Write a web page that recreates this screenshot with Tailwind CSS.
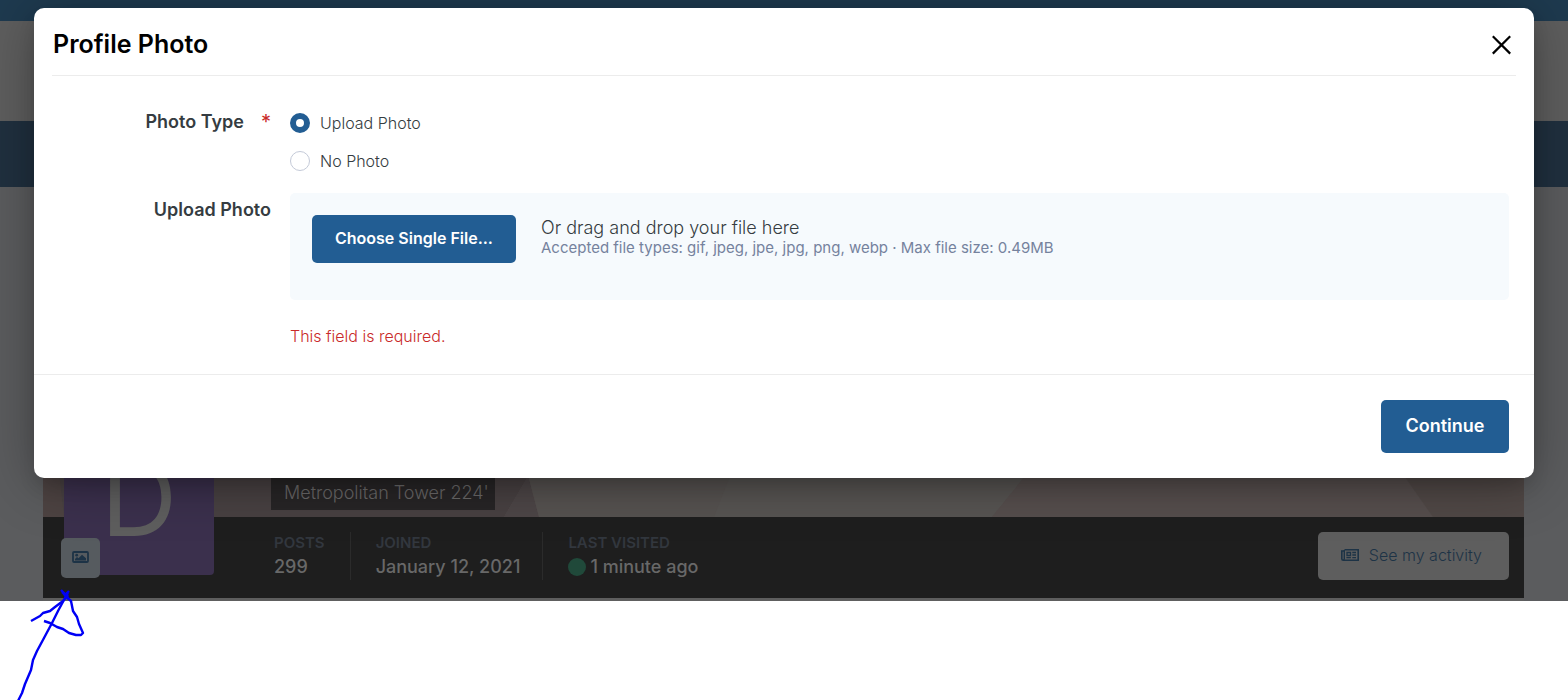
<!DOCTYPE html>
<html lang="en">
  <head>
    <meta charset="UTF-8" />
    <meta name="viewport" content="width=device-width, initial-scale=1.0" />
    <title>Profile Photo</title>
    <script src="https://cdn.jsdelivr.net/npm/@tailwindcss/browser@4"></script>
  </head>
  <body class="relative min-h-screen overflow-hidden bg-white font-['Inter',sans-serif]">
    <!-- Dimmed page -->
    <div class="flex flex-col overflow-hidden">
      <div class="h-[21px] bg-[#1e3a4f]"></div>
      <header class="h-[100px] bg-[#5e5e5e]"></header>
      <nav class="h-[66px] bg-[#20303f]"></nav>

      <main class="flex h-[414px] flex-col justify-end bg-[#5b5c5e] pr-11 pl-[43px]">
        <section class="relative border-b-3 border-[#5e5e5e]">
          <!-- Cover -->
          <div class="relative h-[100px] overflow-hidden bg-[#564f4e]">
            <svg class="absolute inset-0 h-full w-full" viewBox="0 0 1481 100" preserveAspectRatio="none">
              <path d="M0 0H520L461 100H0z" fill="#484142" />
              <path d="M0 0H10L21 100H0z" fill="#4d4342" />
              <path d="M520 0H470L496 100H461z" fill="#4d4647" />
              <path d="M470 0H760L671 100H496z" fill="#565250" />
              <path d="M710 0H1030L949 100H671z" fill="#575452" />
              <path d="M1030 0H1320L1390 100H949z" fill="#564e4d" />
              <path d="M1320 0H1481V100H1390z" fill="#504846" />
            </svg>
            <h1 class="absolute bottom-[7px] left-[228px] bg-[#272526] py-1 pr-1.5 pl-[13px] text-lg leading-[26px] font-light text-[#6a6868]">Metropolitan Tower 224'</h1>
          </div>

          <!-- Avatar -->
          <div class="absolute bottom-[23px] left-[21px] flex size-[150px] items-center justify-center rounded-sm bg-[#3b304d] pb-1 text-[106px] leading-none text-[#5e5e5e]">D</div>
          <button aria-label="Change photo" class="absolute bottom-5 left-[18px] flex h-10 w-[39px] items-center justify-center rounded-[5px] bg-[#565b5f] pb-0.5">
            <svg class="h-3 w-[17px]" viewBox="0 0 17 12" fill="none">
              <rect x="1" y="1" width="15" height="10" rx="1" stroke="#1d3346" stroke-width="1.8" />
              <circle cx="4.7" cy="4.2" r="1.4" fill="#1d3346" />
              <path d="M3 9.5V8l2-2 1.5 1.3L10 3.8 14 7.3v2.2z" fill="#1d3346" />
            </svg>
          </button>

          <!-- Stats -->
          <div class="flex h-[81px] items-center justify-between bg-[#1e1e1e] pr-[15px] pb-1 pl-[231px]">
            <dl class="flex h-12 divide-x divide-[#2b2b2b] text-lg leading-[26px] font-medium text-[#686868]">
              <div class="pr-[25px]">
                <dt class="text-[15px] leading-[22px] font-semibold text-[#32373e]">POSTS</dt>
                <dd>299</dd>
              </div>
              <div class="pr-[22px] pl-[25px]">
                <dt class="text-[15px] leading-[22px] font-semibold text-[#32373e]">JOINED</dt>
                <dd>January 12, 2021</dd>
              </div>
              <div class="pl-[25px]">
                <dt class="text-[15px] leading-[22px] font-semibold text-[#32373e]">LAST VISITED</dt>
                <dd class="flex items-center gap-1"><span class="size-[18px] rounded-full bg-[#20493a]"></span>1 minute ago</dd>
              </div>
            </dl>
            <a href="#" class="flex h-12 items-center gap-2.5 rounded-[5px] bg-[#5e5e5e] pr-[27px] pb-0.5 pl-[23px] text-base text-[#1d3346]">
              <svg class="h-3 w-[18px]" viewBox="0 0 18 12" fill="none" stroke="#1d3346">
                <path d="M3.5.8h13.7v10.4H2.2C1.3 11.2.8 10.7.8 9.8V2h2.4" stroke-width="1.6" />
                <path d="M3.3 1v8.8q0 1-1 1.2" stroke-width="1.4" />
                <path d="M6 3.5h3.5v3H6z" stroke-width="1.3" />
                <path d="M11.3 3.5h3.7M11.3 6h3.7M5.4 8.7h4.5M11.3 8.7h3.7" stroke-width="1.3" />
              </svg>
              <span class="font-light">See my activity</span>
            </a>
          </div>
        </section>
      </main>
    </div>

    <!-- Shadow area stops where the page ends -->
    <div class="absolute inset-x-0 top-0 h-[601px] overflow-hidden">
      <!-- Modal -->
      <div role="dialog" aria-labelledby="modal-title" class="mx-[34px] mt-2 rounded-[10px] bg-white shadow-[0_5px_55px_rgba(0,0,0,0.3),0_10px_20px_-5px_rgba(0,0,0,0.2)]">
        <div class="mx-[18px] flex h-[68px] items-center justify-between border-b border-[#ececec] pr-1 pl-px">
          <h2 id="modal-title" class="pt-1 text-[25px] leading-8 font-semibold text-black">Profile Photo</h2>
          <button aria-label="Close" class="pt-1.5">
            <svg class="size-5" viewBox="0 0 20 20" stroke="#000" stroke-width="2.2">
              <path d="M.8 1.2l17.4 17.4M18.2 1.2L.8 18.6" />
            </svg>
          </button>
        </div>

        <form>
          <div class="grid grid-cols-[237px_1fr] gap-x-[19px] pt-[34px] pr-[25px] pb-[26px]">
            <div class="flex items-start justify-end text-lg leading-6 font-semibold text-[#353c41]">
              <span id="type-label">Photo Type</span>
              <span class="ml-[17px] text-xl leading-6 font-normal text-[#c92a2a]">*</span>
            </div>
            <div role="radiogroup" aria-labelledby="type-label" class="flex flex-col gap-[14px] pt-px text-base font-light text-[#353c41]">
              <label class="flex items-center gap-2.5">
                <input type="radio" name="type" checked class="size-5 appearance-none rounded-full border border-[#c4cad8] checked:border-[6px] checked:border-[#225d93]" />
                Upload Photo
              </label>
              <label class="flex items-center gap-2.5">
                <input type="radio" name="type" class="size-5 appearance-none rounded-full border border-[#c4cad8] checked:border-[6px] checked:border-[#225d93]" />
                No Photo
              </label>
            </div>

            <div class="pt-[25px] text-right text-lg leading-6 font-semibold text-[#353c41]">Upload Photo</div>
            <div class="pt-5">
              <div class="flex h-[107px] items-start gap-[25px] rounded-[5px] bg-[#f6fafd] p-[22px]">
                <button type="button" class="h-12 rounded-[5px] bg-[#225d93] px-[23px] pb-0.5 text-base font-semibold text-white">Choose Single File...</button>
                <div class="pt-[3px]">
                  <p class="text-lg leading-5 font-light text-[#353c41]">Or drag and drop your file here</p>
                  <p class="text-[15px] leading-5 text-[#75829d]">Accepted file types: gif, jpeg, jpe, jpg, png, webp · Max file size: 0.49MB</p>
                </div>
              </div>
              <p class="mt-6 text-base font-light text-[#c92a2a]">This field is required.</p>
            </div>
          </div>

          <div class="flex justify-end border-t border-[#ececec] px-[25px] py-[25px]">
            <button type="submit" class="h-[53px] w-32 rounded-[5px] bg-[#225d93] pb-0.5 text-lg font-semibold text-white">Continue</button>
          </div>
        </form>
      </div>
    </div>

    <!-- Hand-drawn arrow -->
    <svg class="pointer-events-none absolute top-[580px] left-0 h-[120px] w-[100px]" viewBox="0 580 100 120" fill="none" stroke="#0000f5" stroke-width="2.4" stroke-linejoin="round">
      <path d="M18 701l4-8 3-9 6-14 2-10 4-9 7-13 8-15 6-12 7-13 3-5" />
      <path d="M31 621l9-5 3-3 7-2 5-4 8-6 5-6" />
      <path d="M61 590l7 7M69 591l-5 5M62 592l7 7" />
      <path d="M65 596l6 5 2 10 4 6 2 7 4 9-2 2h-5l-7-2-6-4-6-2-7-4-6-2" />
    </svg>
  </body>
</html>
